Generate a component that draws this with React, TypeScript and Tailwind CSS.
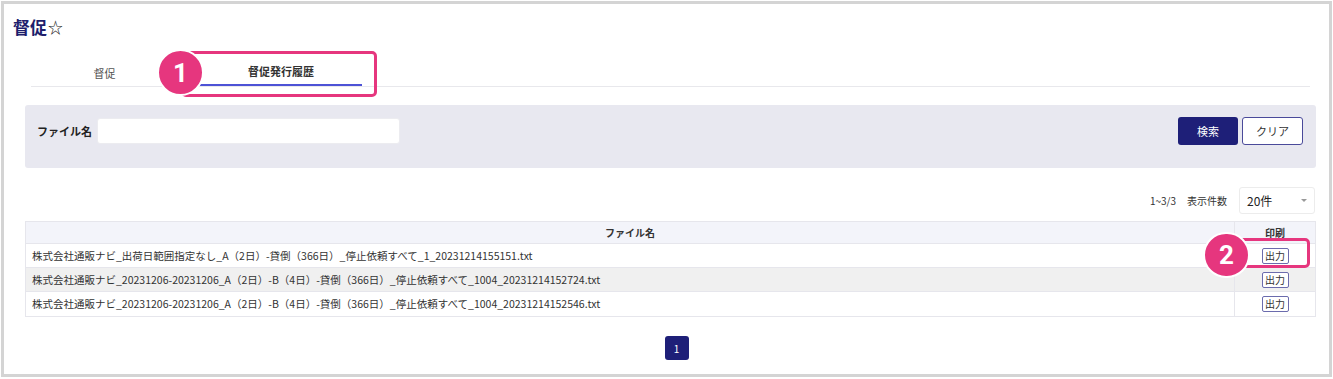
import React from "react";

const rows = [
  "株式会社通販ナビ_出荷日範囲指定なし_A（2日）-貸倒（366日）_停止依頼すべて_1_20231214155151.txt",
  "株式会社通販ナビ_20231206-20231206_A（2日）-B（4日）-貸倒（366日）_停止依頼すべて_1004_20231214152724.txt",
  "株式会社通販ナビ_20231206-20231206_A（2日）-B（4日）-貸倒（366日）_停止依頼すべて_1004_20231214152546.txt",
];

export default function App() {
  return (
    <div
      className="w-[1333px] h-[379px] bg-white pt-[1px] pl-[1px] relative overflow-hidden"
      style={{ fontFamily: '"Noto Sans CJK JP", "Noto Sans", Roboto, sans-serif' }}
    >
      <div className="w-[1331px] h-[376px] border-[3px] border-[#d4d4d4] flex flex-col">
        <div className="pl-[9px] h-[44px] flex items-center text-[17px] font-bold text-[#1f1f6d] leading-none">
          督促<span className="text-[15px] font-normal text-[#222] ml-[1px]">☆</span>
        </div>
        <div className="ml-[27px] mr-[19px] h-[39px] border-b border-[#e8e8ec] flex text-[11px] text-[#333]">
          <div className="w-[147px] flex items-center justify-center pt-[12px] text-[#555]">督促</div>
          <div className="ml-[22px] w-[162px] flex items-center justify-center pt-[10px] font-bold border-b-2 border-[#4d52d6]">
            督促発行履歴
          </div>
        </div>
        <div className="ml-[21px] mr-[13px] mt-[18px] h-[63px] bg-[#e8e8f0] rounded-[3px] flex items-start pt-[12px] pl-[12px] pr-[13px]">
          <span className="text-[11px] font-bold text-[#222] w-[60px] mt-[6px] leading-[16px]">ファイル名</span>
          <div className="w-[303px] h-[26px] mt-[1px] bg-white rounded-[3px] border border-[#ececf0]"></div>
          <div className="ml-auto flex gap-[4px]">
            <button className="w-[60px] h-[28px] rounded-[3px] bg-[#1e1f78] text-white text-[11px]">検索</button>
            <button className="w-[61px] h-[28px] rounded-[3px] bg-white border border-[#4a4a9a] text-[#333] text-[11px]">クリア</button>
          </div>
        </div>
        <div className="ml-[21px] mr-[14px] mt-[19px] h-[27px] flex items-center justify-end text-[10px] text-[#333]">
          <span>1~3/3</span>
          <span className="ml-[11px]">表示件数</span>
          <div className="ml-[12px] w-[76px] h-[27px] border border-[#ececec] rounded-[3px] flex items-center pl-[7px] pr-[7px] text-[12px] text-[#222]">
            20件
            <span className="ml-auto w-0 h-0 border-l-[3px] border-r-[3px] border-t-[3px] border-l-transparent border-r-transparent border-t-[#999]"></span>
          </div>
        </div>
        <div className="ml-[21px] mr-[13px] mt-[7px] border border-[#e6e6ec]">
          <div className="flex h-[22px] bg-[#f3f4fa] text-[10px] font-bold text-[#333] border-b border-[#e6e6ec]">
            <div className="flex-1 flex items-center justify-center border-r border-[#e6e6ec]">ファイル名</div>
            <div className="w-[80px] flex items-center justify-center">印刷</div>
          </div>
          {rows.map((r, i) => (
            <div
              key={i}
              className={`flex h-[24px] text-[10.5px] text-[#333] ${i === 1 ? "bg-[#f0f0f0]" : "bg-white"} ${i < 2 ? "border-b border-[#e6e6ec]" : ""}`}
            >
              <div className="flex-1 flex items-center pl-[6px] border-r border-[#e6e6ec] whitespace-nowrap">{r}</div>
              <div className="w-[80px] flex items-center justify-center">
                <span className="w-[27px] h-[16px] border border-[#6b6bad] rounded-[2px] bg-white flex items-center justify-center text-[10px] text-[#333] leading-none">
                  出力
                </span>
              </div>
            </div>
          ))}
        </div>
        <div className="flex justify-center mt-[19px] ml-[21px] mr-[13px] pl-[12px]">
          <div className="w-[24px] h-[24px] rounded-[3px] bg-[#1e1f78] text-white text-[10px] flex items-center justify-center">
            1
          </div>
        </div>
      </div>

      {/* annotation 1 */}
      <div className="absolute left-[181px] top-[51px] w-[196px] h-[46px] border-[3px] border-[#e6367e] rounded-[5px]"></div>
      <div
        className="absolute left-[157px] top-[49px] w-[47px] h-[47px] rounded-full bg-[#e6367e] border-[2px] border-white flex items-center justify-center text-white font-bold text-[26px] leading-none"
        style={{ fontFamily: 'Roboto, "Noto Sans", sans-serif' }}
      >
        1
      </div>

      {/* annotation 2 */}
      <div className="absolute left-[1235px] top-[238px] w-[75px] h-[30px] border-[3px] border-[#e6367e] rounded-[5px]"></div>
      <div
        className="absolute left-[1203px] top-[232px] w-[47px] h-[46px] rounded-full bg-[#e6367e] border-[2px] border-white flex items-center justify-center text-white font-bold text-[26px] leading-none"
        style={{ fontFamily: 'Roboto, "Noto Sans", sans-serif' }}
      >
        2
      </div>
    </div>
  );
}
